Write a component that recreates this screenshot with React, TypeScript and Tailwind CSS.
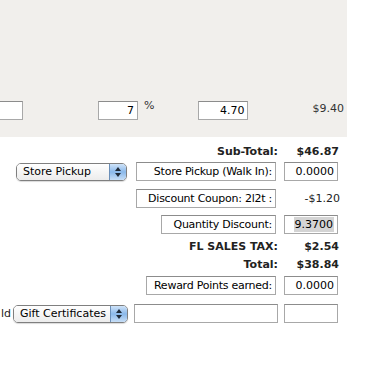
import React from 'react';

const font = { fontFamily: '"DejaVu Sans", Verdana, sans-serif' };

function Field({ className = '', children }: { className?: string; children?: React.ReactNode }) {
  return (
    <div
      className={`h-[19px] bg-white border border-[#a8a8a8] border-t-[#8c8c8c] flex items-center justify-end pr-[3px] text-[11px] text-black leading-none ${className}`}
    >
      {children}
    </div>
  );
}

function Popup({ label, className = '' }: { label: string; className?: string }) {
  return (
    <div
      className={`h-[18px] flex rounded-[5px] border border-[#7f7f7f] overflow-hidden shadow-[0_1px_1px_rgba(0,0,0,0.15)] ${className}`}
    >
      <div className="flex-1 flex items-center pl-[6px] text-[11px] text-black leading-none bg-gradient-to-b from-white to-[#ececec]">
        {label}
      </div>
      <div className="w-[17px] border-l border-[#6b8fb8] bg-gradient-to-b from-[#cfe3f8] via-[#8ab8ea] to-[#c7def6] flex flex-col items-center justify-center gap-[2px]">
        <svg width="6" height="4" viewBox="0 0 6 4"><path d="M3 0 L6 4 L0 4 Z" fill="#1f2a38" /></svg>
        <svg width="6" height="4" viewBox="0 0 6 4"><path d="M0 0 L6 0 L3 4 Z" fill="#1f2a38" /></svg>
      </div>
    </div>
  );
}

function Row({ left, right, className = '' }: { left: React.ReactNode; right?: React.ReactNode; className?: string }) {
  return (
    <div className={`flex ${className}`}>
      <div className="w-[278px] flex items-center justify-end">{left}</div>
      <div className="w-[54px] ml-[6px] flex items-center justify-end">{right}</div>
    </div>
  );
}

export default function App() {
  return (
    <div className="w-[380px] h-[377px] bg-white overflow-hidden text-[#222]" style={font}>
      {/* Line item panel */}
      <div className="w-[347px] h-[137px] bg-[#f1efec] pt-[101px]">
        <div className="flex items-start">
          <Field className="w-[23px] border-l-0" />
          <Field className="w-[40px] ml-[75px]">7</Field>
          <span className="ml-[6px] -mt-[1px] text-[11px] leading-none text-[#333]">%</span>
          <Field className="w-[50px] ml-[44px]">4.70</Field>
          <span className="ml-auto mr-[3px] mt-[2px] text-[11px] leading-none text-[#333]">$9.40</span>
        </div>
      </div>

      {/* Totals */}
      <Row
        className="mt-[7px] h-[14px]"
        left={<span className="font-bold text-[11px] leading-none">Sub-Total:</span>}
        right={<span className="font-bold text-[11px] leading-none -mr-[1px]">$46.87</span>}
      />
      <Row
        className="mt-[4px]"
        left={
          <div className="w-full flex items-center pl-[16px]">
            <Popup label="Store Pickup" className="w-[111px]" />
            <Field className="w-[140px] ml-auto mr-[2px] tracking-[-0.25px]">Store Pickup (Walk In):</Field>
          </div>
        }
        right={<Field className="w-[54px]">0.0000</Field>}
      />
      <Row
        className="mt-[8px]"
        left={<Field className="w-[140px] mr-[2px] tracking-[-0.25px]">Discount Coupon: 2l2t :</Field>}
        right={<span className="text-[11px] leading-none -mr-[2px]">-$1.20</span>}
      />
      <Row
        className="mt-[7px]"
        left={<Field className="w-[115px] mr-[2px] tracking-[-0.25px]">Quantity Discount:</Field>}
        right={
          <Field className="w-[54px]">
            <span className="bg-[#d4d4d4] px-[1px] py-[2px]">9.3700</span>
          </Field>
        }
      />
      <Row
        className="mt-[5px] h-[14px]"
        left={<span className="font-bold text-[11px] leading-none">FL SALES TAX:</span>}
        right={<span className="font-bold text-[11px] leading-none -mr-[1px]">$2.54</span>}
      />
      <Row
        className="mt-[4px] h-[14px]"
        left={<span className="font-bold text-[11px] leading-none">Total:</span>}
        right={<span className="font-bold text-[11px] leading-none -mr-[1px]">$38.84</span>}
      />
      <Row
        className="mt-[5px]"
        left={<Field className="w-[130px] mr-[2px] tracking-[-0.25px]">Reward Points earned:</Field>}
        right={<Field className="w-[54px]">0.0000</Field>}
      />
      <Row
        className="mt-[9px]"
        left={
          <div className="w-full flex items-center">
            <span className="text-[11px] leading-none pl-[1px] w-[13px]">ld</span>
            <Popup label="Gift Certificates" className="w-[115px]" />
            <Field className="w-[144px] ml-auto" />
          </div>
        }
        right={<Field className="w-[54px]" />}
      />
    </div>
  );
}
